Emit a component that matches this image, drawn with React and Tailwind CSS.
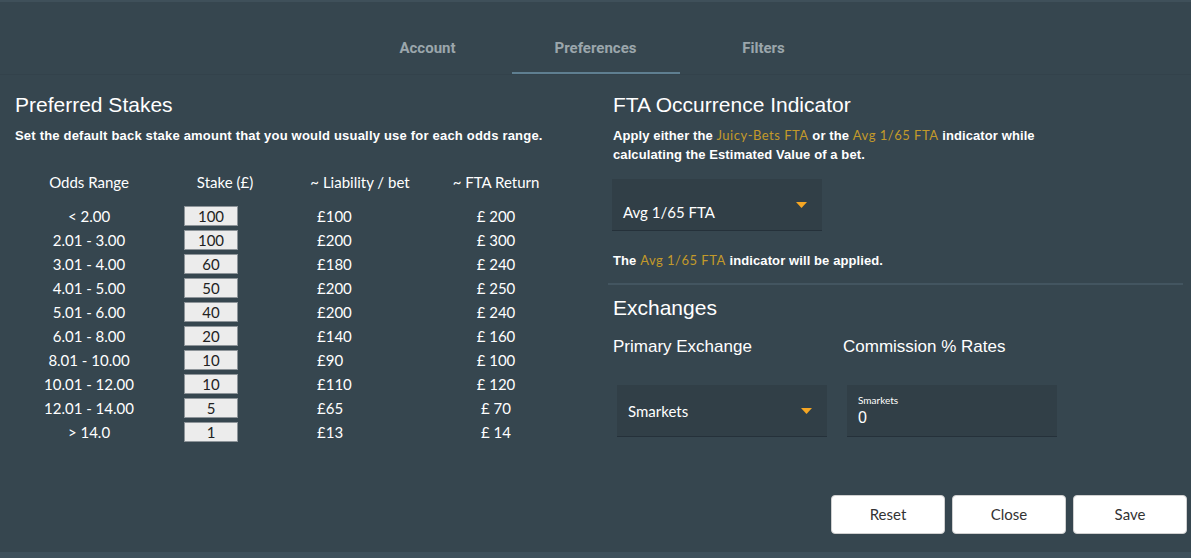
import React from "react";

const rows = [
  ["< 2.00", "100", "£100", "£ 200"],
  ["2.01 - 3.00", "100", "£200", "£ 300"],
  ["3.01 - 4.00", "60", "£180", "£ 240"],
  ["4.01 - 5.00", "50", "£200", "£ 250"],
  ["5.01 - 6.00", "40", "£200", "£ 240"],
  ["6.01 - 8.00", "20", "£140", "£ 160"],
  ["8.01 - 10.00", "10", "£90", "£ 100"],
  ["10.01 - 12.00", "10", "£110", "£ 120"],
  ["12.01 - 14.00", "5", "£65", "£ 70"],
  ["> 14.0", "1", "£13", "£ 14"],
];

const arial = "font-['Liberation_Sans',Arial,sans-serif]";
const lato = "font-['Lato','Noto_Sans',sans-serif]";

function Caret() {
  return (
    <svg width="11" height="6" viewBox="0 0 11 6" className="shrink-0">
      <path d="M0 0 L11 0 L5.5 6 Z" fill="#f5a623" />
    </svg>
  );
}

function SelectBox({ value, textTop, className }) {
  return (
    <div className={"relative h-[52px] w-[210px] bg-[#313f47] border-b border-[#25313a] " + className}>
      <div className={"absolute left-[11px] text-[15px] leading-[18px] text-white " + lato} style={{ top: textTop }}>
        {value}
      </div>
      <div className="absolute right-[15px] top-[23px]">
        <Caret />
      </div>
    </div>
  );
}

function Gold({ children }) {
  return (
    <span className={"text-[#c39a2a] font-normal text-[13px] leading-[16px] tracking-[0.5px] " + lato}>{children}</span>
  );
}

export default function App() {
  const [stakes, setStakes] = React.useState(rows.map((r) => r[1]));
  return (
    <div className="w-full h-[558px] bg-[#36464f] text-white flex flex-col overflow-hidden">
      <div className="h-[2px] bg-[#3f505a]" />
      {/* tabs */}
      <div className="h-[73px] flex justify-center border-b border-[#33424b]">
        <div className="flex items-stretch pt-[22px]">
          {["Account", "Preferences", "Filters"].map((t) => (
            <div
              key={t}
              className={
                "w-[168px] flex items-center justify-center text-[15px] font-bold text-[#9ba6ac] font-['Roboto',sans-serif] border-b-2 " +
                (t === "Preferences" ? "border-[#5f7f91]" : "border-transparent")
              }
            >
              {t}
            </div>
          ))}
        </div>
      </div>

      <div className="flex flex-1">
        {/* left */}
        <div className="w-[608px] pl-[15px] pt-[18px]">
          <div className={"text-[21px] leading-[24px] " + arial}>Preferred Stakes</div>
          <div className={"mt-[11px] text-[13px] leading-[16px] font-bold tracking-[0.2px] " + arial}>
            Set the default back stake amount that you would usually use for each odds range.
          </div>
          <div className={"mt-[26px] text-[15px] " + lato}>
            <div className="flex h-[24px] items-center">
              <div className="w-[148px] text-center">Odds Range</div>
              <div className="w-[124px] text-center">Stake (£)</div>
              <div className="w-[146px] text-center">~ Liability / bet</div>
              <div className="w-[126px] text-center">~ FTA Return</div>
            </div>
            <div className="mt-[10px]">
              {rows.map((r, i) => (
                <div key={r[0]} className="flex h-[24px] items-center">
                  <div className="w-[148px] text-center">{r[0]}</div>
                  <div className="w-[124px] pl-[21px]">
                    <input
                      value={stakes[i]}
                      onChange={(e) => {
                        const n = [...stakes];
                        n[i] = e.target.value;
                        setStakes(n);
                      }}
                      className="block w-[54px] h-[20px] bg-[#ececec] text-[#222] text-center text-[15px] border border-[#8d9499] outline-none"
                    />
                  </div>
                  <div className="w-[146px] pl-[30px]">{r[2]}</div>
                  <div className="w-[126px] text-center">{r[3]}</div>
                </div>
              ))}
            </div>
          </div>
        </div>

        {/* right */}
        <div className="flex-1 pr-[4px] pt-[18px] flex flex-col">
          <div className="pl-[5px]">
            <div className={"text-[21px] leading-[24px] " + arial}>FTA Occurrence Indicator</div>
            <div className={"mt-[9px] w-[425px] text-[13px] leading-[19px] font-bold tracking-[0.1px] " + arial}>
              Apply either the <Gold>Juicy-Bets FTA</Gold> or the <Gold>Avg 1/65 FTA</Gold> indicator while
              calculating the Estimated Value of a bet.
            </div>
            <SelectBox value="Avg 1/65 FTA" textTop={24} className="mt-[15px] -ml-[1px]" />
            <div className={"mt-[21px] text-[13px] leading-[16px] font-bold tracking-[0.1px] " + arial}>
              The <Gold>Avg 1/65 FTA</Gold> indicator will be applied.
            </div>
          </div>
          <div className="mt-[14px] h-[2px] bg-[#435560] mr-[4px]" />
          <div className="pl-[5px]">
            <div className={"mt-[11px] text-[21px] leading-[24px] " + arial}>Exchanges</div>
            <div className={"mt-[17px] flex text-[17px] leading-[20px] " + arial}>
              <div className="w-[230px]">Primary Exchange</div>
              <div>Commission % Rates</div>
            </div>
            <div className="mt-[28px] flex gap-[20px] pl-[4px]">
              <SelectBox value="Smarkets" textTop={17} className="" />
              <div className="h-[52px] w-[210px] bg-[#313f47] border-b border-[#25313a] pl-[11px] pt-[9px]">
                <div className={"text-[10px] leading-[12px] text-white " + lato}>Smarkets</div>
                <div className={"mt-[2px] text-[16px] leading-[20px] text-white " + arial}>0</div>
              </div>
            </div>
          </div>
          <div className="mt-[58px] flex justify-end gap-[7px]">
            {["Reset", "Close", "Save"].map((b) => (
              <button
                key={b}
                className={"w-[114px] h-[39px] bg-white rounded-[4px] text-[#333] text-[15px] border border-[#d0d0d0] " + lato}
              >
                {b}
              </button>
            ))}
          </div>
        </div>
      </div>
      <div className="h-[6px] bg-[#3e505b]" />
    </div>
  );
}
